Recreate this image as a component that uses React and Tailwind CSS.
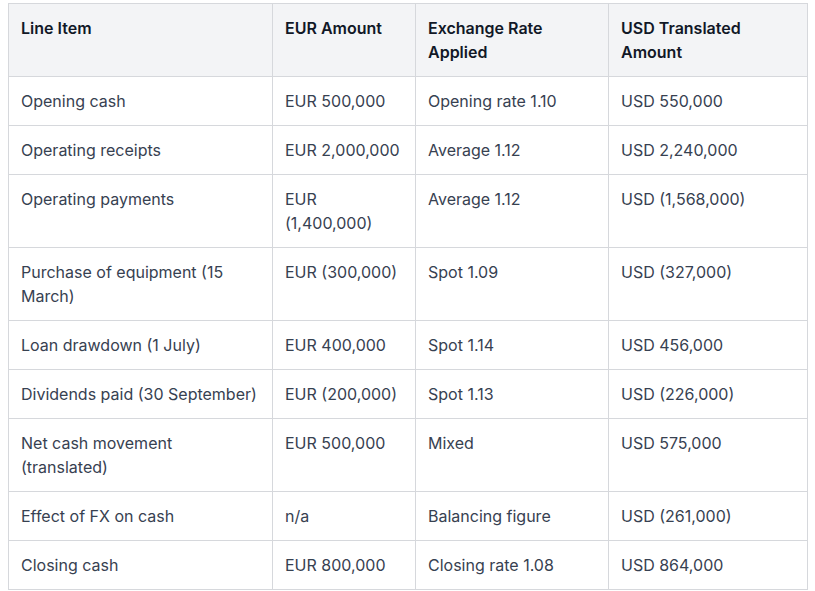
import React from "react";

const rows = [
  ["Opening cash", "EUR 500,000", "Opening rate 1.10", "USD 550,000"],
  ["Operating receipts", "EUR 2,000,000", "Average 1.12", "USD 2,240,000"],
  ["Operating payments", "EUR (1,400,000)", "Average 1.12", "USD (1,568,000)"],
  ["Purchase of equipment (15 March)", "EUR (300,000)", "Spot 1.09", "USD (327,000)"],
  ["Loan drawdown (1 July)", "EUR 400,000", "Spot 1.14", "USD 456,000"],
  ["Dividends paid (30 September)", "EUR (200,000)", "Spot 1.13", "USD (226,000)"],
  ["Net cash movement (translated)", "EUR 500,000", "Mixed", "USD 575,000"],
  ["Effect of FX on cash", "n/a", "Balancing figure", "USD (261,000)"],
  ["Closing cash", "EUR 800,000", "Closing rate 1.08", "USD 864,000"],
];

const headers = ["Line Item", "EUR Amount", "Exchange Rate Applied", "USD Translated Amount"];

export default function App() {
  return (
    <div className="bg-white w-[815px] h-[591px] pl-2 pt-[3px] font-['Inter',sans-serif]">
      <table className="table-fixed border-collapse w-[799px] text-base leading-6">
        <colgroup>
          <col className="w-[264px]" />
          <col className="w-[143px]" />
          <col className="w-[193px]" />
          <col className="w-[199px]" />
        </colgroup>
        <thead>
          <tr className="bg-[#f3f4f6]">
            {headers.map((h) => (
              <th
                key={h}
                className="border border-[#d6d8dc] px-3 py-3 text-left align-top font-semibold text-[#111827]"
              >
                {h}
              </th>
            ))}
          </tr>
        </thead>
        <tbody>
          {rows.map((r, i) => (
            <tr key={i}>
              {r.map((c, j) => (
                <td
                  key={j}
                  className="border border-[#d6d8dc] px-3 py-3 align-top text-[#374151]"
                >
                  {c}
                </td>
              ))}
            </tr>
          ))}
        </tbody>
      </table>
    </div>
  );
}
